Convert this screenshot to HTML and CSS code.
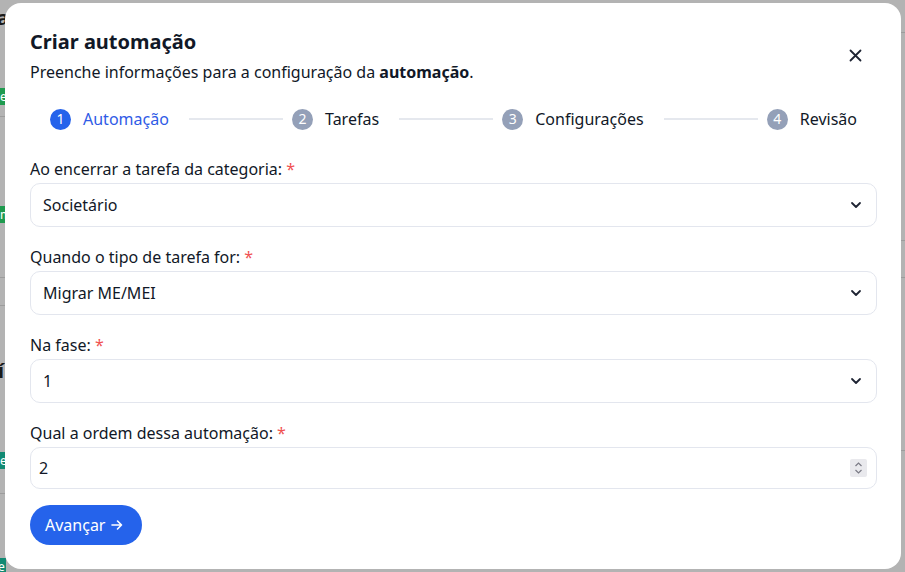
FILE: index.html
```html
<!DOCTYPE html>
<html lang="pt">
<head>
<meta charset="utf-8">
<title>Criar automação</title>
<link rel="stylesheet" href="styles.css">
</head>
<body>
<div class="backdrop">
  <div class="bg-left">
    <span class="bg-letter l1">a</span>
    <span class="bg-badge b1">e</span>
    <span class="bg-line ln1"></span>
    <span class="bg-badge b2">m</span>
    <span class="bg-line ln2"></span>
    <span class="bg-line ln3"></span>
    <span class="bg-letter l2">í</span>
    <span class="bg-badge teal b3">e</span>
    <span class="bg-line ln4"></span>
    <span class="bg-badge teal b4">e concluída</span>
  </div>
  <div class="bg-right">
    <span class="bg-line r1"></span>
    <span class="bg-line r2"></span>
    <span class="bg-line r3"></span>
    <span class="bg-line r4"></span>
  </div>

  <div class="modal">
    <div class="modal-head">
      <div>
        <h1 class="title">Criar automação</h1>
        <p class="subtitle">Preenche informações para a configuração da <strong>automação</strong>.</p>
      </div>
      <button class="close" aria-label="Fechar">
        <svg width="13" height="13" viewBox="0 0 13 13"><path d="M1.5 1.5 L11.5 11.5 M11.5 1.5 L1.5 11.5" stroke="#1e2433" stroke-width="1.8" stroke-linecap="round"/></svg>
      </button>
    </div>

    <div class="stepper">
      <div class="step active"><span class="dot">1</span><span class="step-label">Automação</span></div>
      <span class="connector"></span>
      <div class="step"><span class="dot">2</span><span class="step-label">Tarefas</span></div>
      <span class="connector"></span>
      <div class="step"><span class="dot">3</span><span class="step-label">Configurações</span></div>
      <span class="connector"></span>
      <div class="step"><span class="dot">4</span><span class="step-label">Revisão</span></div>
    </div>

    <form class="form">
      <div class="field">
        <label class="label">Ao encerrar a tarefa da categoria: <span class="req">*</span></label>
        <div class="control select"><span>Societário</span>
          <svg class="chev" width="12" height="8" viewBox="0 0 12 8"><path d="M2 2 L6 6 L10 2" fill="none" stroke="#1e2433" stroke-width="1.8" stroke-linecap="round" stroke-linejoin="round"/></svg>
        </div>
      </div>
      <div class="field">
        <label class="label">Quando o tipo de tarefa for: <span class="req">*</span></label>
        <div class="control select"><span>Migrar ME/MEI</span>
          <svg class="chev" width="12" height="8" viewBox="0 0 12 8"><path d="M2 2 L6 6 L10 2" fill="none" stroke="#1e2433" stroke-width="1.8" stroke-linecap="round" stroke-linejoin="round"/></svg>
        </div>
      </div>
      <div class="field">
        <label class="label">Na fase: <span class="req">*</span></label>
        <div class="control select"><span>1</span>
          <svg class="chev" width="12" height="8" viewBox="0 0 12 8"><path d="M2 2 L6 6 L10 2" fill="none" stroke="#1e2433" stroke-width="1.8" stroke-linecap="round" stroke-linejoin="round"/></svg>
        </div>
      </div>
      <div class="field">
        <label class="label">Qual a ordem dessa automação: <span class="req">*</span></label>
        <div class="control number"><span>2</span>
          <span class="spin">
            <svg width="9" height="14" viewBox="0 0 9 14"><path d="M1.5 5 L4.5 2 L7.5 5 M1.5 9 L4.5 12 L7.5 9" fill="none" stroke="#7a7a85" stroke-width="1.2"/></svg>
          </span>
        </div>
      </div>
      <div class="actions">
        <button type="button" class="btn">Avançar
          <svg class="arrow" width="12" height="12" viewBox="0 0 12 12"><path d="M1 6 H10.5 M6.5 2 L10.5 6 L6.5 10" fill="none" stroke="#fff" stroke-width="1.6" stroke-linecap="round" stroke-linejoin="round"/></svg>
        </button>
      </div>
    </form>
  </div>
</div>
</body>
</html>
```

FILE: styles.css
```css
* { box-sizing: border-box; }
html, body { margin: 0; padding: 0; }
body {
  font-family: "Noto Sans", "Open Sans", sans-serif;
  color: #1a2233;
  width: 905px;
  height: 572px;
  overflow: hidden;
  background: #b3b3b3;
}
.backdrop {
  position: relative;
  width: 905px;
  height: 572px;
  padding: 3px 4px 3px 5px;
  display: flex;
}
.bg-left, .bg-right {
  position: absolute;
  top: 0;
  bottom: 0;
  overflow: hidden;
}
.bg-left { left: 0; width: 6px; }
.bg-right { right: 0; width: 4px; }
.bg-letter { position: absolute; left: 0; font-weight: 700; font-size: 20px; color: #1a1a1a; line-height: 1; }
.l1 { top: 8px; left: -3px; }
.l2 { top: 361px; left: -2px; }
.bg-badge { position: absolute; left: -4px; height: 17px; padding: 0 4px; font-size: 12px; line-height: 17px; color: #fff; background: #1e9a4e; white-space: nowrap; }
.bg-badge.teal { background: #118a73; }
.b1 { top: 88px; }
.b2 { top: 206px; }
.b3 { top: 452px; }
.b4 { top: 558px; left: -6px; width: 100px; }
.bg-line { position: absolute; left: 0; right: 0; height: 1px; background: #9c9c9c; }
.ln1 { top: 116px; }
.ln2 { top: 277px; }
.ln3 { top: 305px; }
.ln4 { top: 493px; }
.r1 { top: 32px; }
.r2 { top: 240px; }
.r3 { top: 277px; }
.r4 { top: 450px; }

.modal {
  position: relative;
  z-index: 1;
  flex: 1;
  background: #fff;
  border-radius: 16px;
  padding: 25px 24px 24px 25px;
  display: flex;
  flex-direction: column;
}
.modal-head {
  display: flex;
  justify-content: space-between;
  align-items: flex-start;
}
.title {
  margin: 0;
  font-size: 20px;
  font-weight: 700;
  line-height: 28px;
  color: #111827;
}
.subtitle {
  margin: 4px 0 0;
  font-size: 16px;
  line-height: 24px;
  color: #111827;
}
.subtitle strong { font-weight: 700; }
.close {
  border: 0;
  background: none;
  padding: 0;
  margin: 21px 15px 0 0;
  width: 13px;
  height: 13px;
  display: flex;
}
.stepper {
  display: flex;
  align-items: center;
  padding: 0 20px;
  margin-top: 23px;
  height: 24px;
}
.step {
  display: flex;
  align-items: center;
  gap: 12px;
  font-size: 16px;
  color: #111827;
  white-space: nowrap;
}
.dot {
  width: 21px;
  height: 21px;
  border-radius: 50%;
  background: #94a0b8;
  color: #fff;
  font-size: 14px;
  display: flex;
  align-items: center;
  justify-content: center;
  line-height: 1;
}
.step.active .dot { background: #2563eb; }
.step.active .step-label { color: #2f5be6; }
.connector {
  flex: 1;
  height: 2px;
  background: #e5e8ee;
  margin: 0 9px 0 20px;
}
.form {
  display: flex;
  flex-direction: column;
  gap: 18px;
  margin-top: 26px;
}
.field {
  display: flex;
  flex-direction: column;
  gap: 2px;
}
.label {
  font-size: 16px;
  line-height: 24px;
  color: #111827;
}
.req { color: #f05252; }
.control {
  height: 44px;
  border: 1px solid #e3e6ee;
  border-radius: 10px;
  display: flex;
  align-items: center;
  justify-content: space-between;
  padding: 0 14px 0 12px;
  font-size: 16px;
  color: #111827;
}
.control.number { height: 42px; padding: 0 9px 0 8px; }
.chev { display: block; }
.spin {
  width: 17px;
  height: 18px;
  background: #e9e9ed;
  border-radius: 2px;
  display: flex;
  align-items: center;
  justify-content: center;
}
.actions { margin-top: -2px; }
.btn {
  font-family: inherit;
  background: #2563eb;
  color: #fff;
  border: 0;
  border-radius: 20px;
  height: 40px;
  padding: 0 19px 0 15px;
  font-size: 16px;
  display: inline-flex;
  align-items: center;
  gap: 6px;
}
.arrow { display: block; }
```
